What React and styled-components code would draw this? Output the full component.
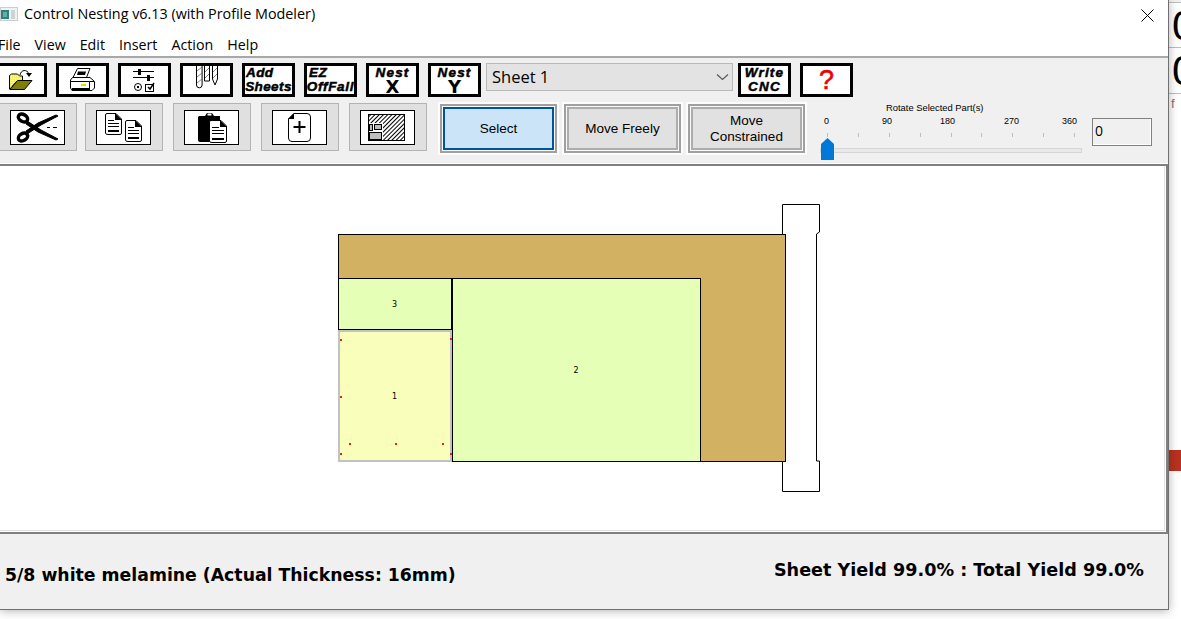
import React from 'react';
import styled, { createGlobalStyle } from 'styled-components';

const GlobalStyle = createGlobalStyle`
  html, body {
    margin: 0;
    height: 100%;
    overflow: hidden;
    background: #fff;
  }
  * { box-sizing: border-box; }
`;

const Screen = styled.div`
  display: flex;
  width: 1181px;
  height: 619px;
  overflow: hidden;
  font-family: "Open Sans", "Noto Sans", sans-serif;
  color: #000;
`;

const Window = styled.div`
  position: relative;
  z-index: 1;
  flex: none;
  display: flex;
  flex-direction: column;
  width: 1169px;
  height: 610px;
  background: #f0f0f0;
  border-right: 1px solid #707070;
  border-bottom: 1px solid #707070;
  box-shadow: 0 1px 9px rgba(0, 0, 0, 0.3);
  overflow: hidden;
`;

const TitleBar = styled.div`
  flex: none;
  display: flex;
  align-items: center;
  height: 30px;
  padding-bottom: 3px;
  background: #fff;
  font-size: 14.35px;
`;

const TitleText = styled.span`
  margin-left: 6px;
  flex: 1;
`;

const CloseIcon = styled.svg`
  margin-right: 14px;
  margin-top: 3px;
`;

const MenuBar = styled.div`
  flex: none;
  display: flex;
  align-items: center;
  gap: 14px;
  height: 28px;
  padding: 2px 0 0 0;
  margin-left: -2px;
  background: #fff;
  border-bottom: 2px solid #a8a8a8;
  font-size: 14.25px;
`;

const MenuItem = styled.span``;

const ToolRow = styled.div`
  flex: none;
  display: flex;
  align-items: flex-start;
  margin-top: 5px;
  margin-left: ${({ $left }) => $left}px;
`;

const IconGroup = styled.div`
  display: flex;
  gap: 9px;
`;

const FrameButton = styled.div`
  flex: none;
  display: flex;
  flex-direction: column;
  align-items: center;
  justify-content: center;
  width: 53px;
  height: 34px;
  background: #fff;
  border: 3px solid #000;
  overflow: hidden;
`;

const ItalicLabel = styled.span`
  display: block;
  align-self: ${({ $start }) => ($start !== undefined ? 'flex-start' : 'center')};
  margin-left: ${({ $start }) => $start || 0}px;
  font-family: "Liberation Sans", sans-serif;
  font-size: 13.5px;
  font-weight: 700;
  font-style: italic;
  line-height: 14px;
  letter-spacing: ${({ $spacing }) => $spacing || 0.4}px;
  -webkit-text-stroke: 0.5px #000;
  white-space: nowrap;
`;

const AxisLabel = styled.span`
  display: block;
  font-family: "DejaVu Sans", sans-serif;
  font-size: 18px;
  font-weight: 700;
  line-height: 14px;
`;

const HelpMark = styled.span`
  font-family: "Liberation Sans", sans-serif;
  font-size: 27px;
  line-height: 28px;
  color: #f00000;
  -webkit-text-stroke: 0.6px #f00000;
`;

const SheetSelect = styled.div`
  flex: none;
  display: flex;
  align-items: center;
  justify-content: space-between;
  width: 247px;
  height: 28px;
  margin: 0 5px;
  padding: 0 2px 1px 5px;
  background: #e3e3e3;
  border: 1px solid #b9b9b9;
  font-size: 16.5px;
`;

const TileGroup = styled.div`
  display: flex;
  gap: 10px;
  margin-top: 1px;
  margin-right: 11px;
`;

const Tile = styled.div`
  flex: none;
  width: 78px;
  height: 48px;
  padding: 6px 0 0 10px;
  background: #e0e0e0;
  border: 1px solid #b3b3b3;

  &:first-child {
    margin-right: -2px;
  }
`;

const TileFace = styled.div`
  width: 55px;
  height: 35px;
  background: #fff;
  border: 1px solid #000;
  overflow: hidden;
`;

const ModeGroup = styled.div`
  display: flex;
  gap: 3px;
`;

const ModeButton = styled.div`
  flex: none;
  display: flex;
  align-items: center;
  justify-content: center;
  width: 121px;
  height: 53px;
  padding: 0 9px;
  text-align: center;
  font-family: "Liberation Sans", sans-serif;
  font-size: 13.5px;
  line-height: 16px;
  background: ${({ $active }) => ($active ? '#cce4f7' : '#e1e1e1')};
  box-shadow:
    inset 0 0 0 2px #fdfdfd,
    inset 0 0 0 4px #a0a0a0,
    inset 0 0 0 5px #f8f8f8,
    inset 0 0 0 7px ${({ $active }) => ($active ? '#005499' : '#adadad')};
`;

const RotateGroup = styled.div`
  position: relative;
  flex: none;
  display: flex;
  flex-direction: column;
  width: 262px;
  margin-left: 13px;
  font-family: "Liberation Sans", sans-serif;
`;

const RotateTitle = styled.div`
  margin: 0 0 0 66px;
  height: 12px;
  font-size: 9.4px;
  line-height: 12px;
`;

const ScaleLabels = styled.div`
  display: grid;
  grid-template-columns: 58px 58px 64px 58px auto;
  margin: 1px 0 0 4px;
  height: 15px;
  font-size: 9px;
  line-height: 12px;
`;

const ScaleLabel = styled.span``;

const Ticks = styled.div`
  display: flex;
  justify-content: space-between;
  width: 248px;
  margin: 3px 0 0 7px;
`;

const Tick = styled.span`
  width: 1px;
  height: 4px;
  background: #bdbdbd;
`;

const Track = styled.div`
  height: 5px;
  margin: 11px 0 0 0;
  background: #e7eae7;
  border: 1px solid #d6d6d6;
`;

const Thumb = styled.svg`
  position: absolute;
  left: 1px;
  top: 36px;
`;

const ValueBox = styled.div`
  flex: none;
  width: 60px;
  height: 28px;
  margin: 16px 0 0 10px;
  padding-left: 2px;
  font-size: 14px;
  line-height: 24px;
  background: #f0f0f0;
  border: 1px solid #808080;
  box-shadow: inset -1px -1px 0 #fff;
`;

const Canvas = styled.div`
  position: relative;
  flex: none;
  height: 370px;
  margin-top: 9px;
  background: #fff;
  border: solid #808080;
  border-width: 2px 2px 2px 0;
  box-shadow: inset -1px -1px 0 #fff, inset -2px -2px 0 #e0e0e0, 0 -1px 0 #fff;
`;

const Sheet = styled.div`
  position: absolute;
  left: ${({ $x }) => $x}px;
  top: ${({ $y }) => $y}px;
  width: ${({ $w }) => $w}px;
  height: ${({ $h }) => $h}px;
  background: #d3b163;
  border: 1px solid #000;
`;

const Part = styled.div`
  position: absolute;
  left: ${({ $x }) => $x}px;
  top: ${({ $y }) => $y}px;
  width: ${({ $w }) => $w}px;
  height: ${({ $h }) => $h}px;
  display: flex;
  align-items: center;
  justify-content: center;
  padding-right: 1px;
  background: ${({ $selected }) => ($selected ? '#fafebb' : '#e6ffb6')};
  border: ${({ $selected }) => ($selected ? '2px solid #c2c2c2' : '1px solid #000')};
  font-family: "DejaVu Sans", sans-serif;
  font-size: 8px;
`;

const Marker = styled.span`
  position: absolute;
  left: ${({ $x }) => $x}px;
  top: ${({ $y }) => $y}px;
  width: 2px;
  height: 2px;
  background: #e8202a;
`;

const Bracket = styled.svg`
  position: absolute;
  left: 780px;
  top: 38px;
`;

const StatusBar = styled.div`
  flex: 1;
  display: flex;
  justify-content: space-between;
  align-items: flex-start;
  padding: 0 24px 0 5px;
  font-family: "DejaVu Sans", sans-serif;
  font-weight: 700;
`;

const StatusText = styled.span`
  margin-top: ${({ $top }) => $top}px;
  font-size: ${({ $size }) => $size}px;
  line-height: 20px;
`;

const SideStrip = styled.div`
  flex: 1;
  display: flex;
  flex-direction: column;
  min-width: 0;
  overflow: hidden;
  font-family: "Liberation Sans", sans-serif;
`;

const SideTop = styled.div`
  flex: none;
  height: 3px;
  background: #f0f0f0;
  border-bottom: 1px solid #bdbdbd;
`;

const SideCell = styled.div`
  flex: none;
  height: ${({ $h }) => $h}px;
  padding-left: 3px;
  font-size: 42px;
  line-height: ${({ $h }) => $h}px;
  background: #fff;
  border-bottom: 1px solid #bdbdbd;
`;

const SideNote = styled.div`
  flex: none;
  height: 22px;
  padding-left: 2px;
  font-size: 13px;
  line-height: 20px;
  color: #777;
`;

const SideAlert = styled.div`
  flex: none;
  height: 21px;
  margin-top: 334px;
  background: #b8321f;
`;

const AppIcon = () => (
  <svg width="18" height="14" viewBox="0 0 18 14" shapeRendering="crispEdges">
    <rect width="18" height="14" fill="#c9cfcf" />
    <rect x="1" y="1" width="16" height="12" fill="#eef2f2" />
    <rect x="1" y="3" width="8" height="9" fill="#2f7f7c" />
    <rect x="3" y="5" width="4" height="5" fill="#5fb0a8" />
    <rect x="11" y="3" width="4" height="9" fill="#cdd4d4" />
  </svg>
);

const FolderIcon = () => (
  <svg width="47" height="28" viewBox="0 0 47 28">
    <defs>
      <pattern id="dither" width="2" height="2" patternUnits="userSpaceOnUse">
        <rect width="2" height="2" fill="#f7f06a" />
        <rect width="1" height="1" fill="#fff" />
      </pattern>
    </defs>
    <path d="M12.500 23V9.500L14.500 8H20.500L22.500 10H25.500V16H19L13 23Z" fill="url(#dither)" stroke="#000" />
    <path d="M13 23.500 20.500 14.500H35L27.500 23.500Z" fill="#808000" stroke="#000" />
    <path d="M23 9C24 3.500 30 3 32 8" fill="none" stroke="#000" />
    <path d="M29 7h6l-3 4Z" fill="#000" />
  </svg>
);

const PrinterIcon = () => (
  <svg width="47" height="28" viewBox="0 0 47 28">
    <path d="M18.500 2.500H31L27.500 11.500H14Z" fill="#fff" stroke="#000" />
    <path d="M19 5.500H27L26 9H18Z" fill="#000" />
    <path d="M13.500 11.500H31L35.500 15.500V22L33 24.500H13L11.500 22V14Z" fill="#fff" stroke="#000" />
    <path d="M12 15.500H30.500L35 15.500M30.500 15.500V24" fill="none" stroke="#000" />
    <rect x="22" y="18" width="5" height="2" fill="#e6d800" />
    <rect x="13" y="22" width="17" height="2" fill="#000" />
  </svg>
);

const SettingsIcon = () => (
  <svg width="47" height="28" viewBox="0 0 47 28" shapeRendering="crispEdges">
    <path d="M12 5.500h21M12 11.500h21" stroke="#000" />
    <rect x="17" y="3" width="3" height="6" fill="#000" />
    <rect x="26" y="9" width="3" height="6" fill="#000" />
    <circle cx="17" cy="21" r="3.500" fill="none" stroke="#000" shapeRendering="auto" />
    <circle cx="17" cy="21" r="1" fill="#000" />
    <rect x="24.500" y="18.500" width="8" height="7" fill="none" stroke="#000" />
    <path d="M27 21l2 2 4-6" fill="none" stroke="#000" strokeWidth="1.500" shapeRendering="auto" />
  </svg>
);

const BitsIcon = () => (
  <svg width="47" height="28" viewBox="0 0 47 28">
    <path d="M13.500 0V19a2.800 2.800 0 0 0 5.600 0V0" fill="none" stroke="#000" />
    <path d="M14 5l5-4M14 11l5-4M14 17l5-4" stroke="#555" strokeWidth="0.700" />
    <path d="M21.500 0V15H26.500V0" fill="none" stroke="#000" />
    <path d="M22 6l4-4M22 12l4-4" stroke="#555" strokeWidth="0.700" />
    <path d="M29.500 0V13L32 19 34.500 13V0" fill="none" stroke="#000" />
    <path d="M30 6l4-4M30 12l4-4" stroke="#555" strokeWidth="0.700" />
  </svg>
);

const ChevronIcon = () => (
  <svg width="15" height="10" viewBox="0 0 15 10">
    <path d="M2 2.500 7.500 7.500 13 2.500" fill="none" stroke="#555" strokeWidth="1.100" />
  </svg>
);

const ScissorsIcon = () => (
  <svg width="53" height="33" viewBox="0 0 53 33">
    <ellipse cx="12" cy="7" rx="5" ry="3.500" fill="none" stroke="#000" strokeWidth="3.500" transform="rotate(30 12 7)" />
    <ellipse cx="12" cy="26" rx="5" ry="3.500" fill="none" stroke="#000" strokeWidth="3.500" transform="rotate(-30 12 26)" />
    <path d="M16 10 30 19 47 28 45 29 27 21 15 13Z" fill="#000" stroke="#000" />
    <path d="M16 23 30 14 47 5 45 4 27 12 15 20Z" fill="#000" stroke="#000" />
    <path d="M32 16.500h2M37 16.500h3M43 16.500h3" stroke="#fff" />
    <path d="M36 16.500h3M42 16.500h4" stroke="#000" />
  </svg>
);

// one page with the folded corner, used by the copy and paste icons
const Page = ({ x, y, w = 17, h = 22 }) => (
  <g transform={`translate(${x} ${y})`}>
    <path
      d={`M2 .5H${w - 6}L${w - 0.5} 6V${h - 2}Q${w - 0.5} ${h - 0.5} ${w - 2} ${h - 0.5}H3Q.5 ${h - 0.5} .5 ${h - 2}V2Q.5 .5 2 .5Z`}
      fill="#fff"
      stroke="#000"
    />
    <path d={`M${w - 7} 0 ${w} 7H${w - 7}Z`} fill="#000" />
    <path d={`M3 7.500H${w - 8}M3 10.500H${w - 3}M3 13.500H${w - 3}`} stroke="#000" />
    <rect x="3" y={h - 5} width={w - 6} height="2" fill="#000" />
  </g>
);

const CopyIcon = () => (
  <svg width="53" height="33" viewBox="0 0 53 33">
    <Page x={8} y={2} />
    <Page x={28} y={9} />
  </svg>
);

const PasteIcon = () => (
  <svg width="53" height="33" viewBox="0 0 53 33">
    <path d="M14 5h6l2-3h5l2 3h6v26H15Q13 31 13 29V6Z" fill="#000" />
    <rect x="22.500" y="2.500" width="4" height="2" fill="#fff" />
    <Page x={24} y={9} w={18} h={23} />
  </svg>
);

const InsertIcon = () => (
  <svg width="53" height="33" viewBox="0 0 53 33">
    <path d="M21 2.500H34Q37.500 2.500 37.500 6V27Q37.500 30.500 34 30.500H19Q15.500 30.500 15.500 27V8Z" fill="#fff" stroke="#000" />
    <path d="M21 2 15 8h6Z" fill="#000" />
    <path d="M26.500 10v12M20.500 16h12" stroke="#000" strokeWidth="2" />
  </svg>
);

const LayoutIcon = () => (
  <svg width="53" height="33" viewBox="0 0 53 33" shapeRendering="crispEdges">
    <defs>
      <pattern id="hatch" width="3" height="3" patternUnits="userSpaceOnUse" patternTransform="rotate(45)">
        <rect width="3" height="3" fill="#fff" />
        <rect width="1" height="3" fill="#000" />
      </pattern>
    </defs>
    <rect x="7.500" y="3.500" width="36" height="26" fill="url(#hatch)" stroke="#000" />
    <rect x="8" y="12" width="14" height="17" fill="#fff" />
    <rect x="8.500" y="13.500" width="3" height="6" fill="#bdbdbd" stroke="#000" />
    <rect x="13.500" y="13.500" width="7" height="5" fill="#bdbdbd" stroke="#000" />
    <rect x="8.500" y="21.500" width="12" height="7" fill="#bdbdbd" stroke="#000" />
  </svg>
);

const TILES = [ScissorsIcon, CopyIcon, PasteIcon, InsertIcon, LayoutIcon];
const MENU = ['File', 'View', 'Edit', 'Insert', 'Action', 'Help'];
const ANGLES = [0, 90, 180, 270, 360];
const TICKS = Array.from({ length: 9 }, (_, i) => i);
const MARKERS = [
  [0, 7], [110, 6], [0, 64], [9, 111], [55, 111], [102, 111], [0, 121], [110, 121],
];

const App = () => (
  <Screen>
    <GlobalStyle />
    <Window>
      <TitleBar>
        <AppIcon />
        <TitleText>Control Nesting v6.13 (with Profile Modeler)</TitleText>
        <CloseIcon width="13" height="13" viewBox="0 0 13 13">
          <path d="M.5.5l12 12M12.500.5l-12 12" stroke="#000" />
        </CloseIcon>
      </TitleBar>
      <MenuBar>
        {MENU.map((item) => <MenuItem key={item}>{item}</MenuItem>)}
      </MenuBar>

      <ToolRow $left={-6}>
        <IconGroup>
          <FrameButton><FolderIcon /></FrameButton>
          <FrameButton><PrinterIcon /></FrameButton>
          <FrameButton><SettingsIcon /></FrameButton>
          <FrameButton><BitsIcon /></FrameButton>
          <FrameButton>
            <ItalicLabel $start={1}>Add</ItalicLabel>
            <ItalicLabel>Sheets</ItalicLabel>
          </FrameButton>
          <FrameButton>
            <ItalicLabel $start={2}>EZ</ItalicLabel>
            <ItalicLabel $spacing={0.7}>OffFall</ItalicLabel>
          </FrameButton>
          <FrameButton>
            <ItalicLabel $spacing={1.2}>Nest</ItalicLabel>
            <AxisLabel>X</AxisLabel>
          </FrameButton>
          <FrameButton>
            <ItalicLabel $spacing={1.2}>Nest</ItalicLabel>
            <AxisLabel>Y</AxisLabel>
          </FrameButton>
        </IconGroup>
        <SheetSelect>
          Sheet 1
          <ChevronIcon />
        </SheetSelect>
        <IconGroup>
          <FrameButton>
            <ItalicLabel $spacing={1.2}>Write</ItalicLabel>
            <ItalicLabel $spacing={1.2}>CNC</ItalicLabel>
          </FrameButton>
          <FrameButton><HelpMark>?</HelpMark></FrameButton>
        </IconGroup>
      </ToolRow>

      <ToolRow $left={-1}>
        <TileGroup>
          {TILES.map((Icon, i) => (
            <Tile key={i}><TileFace><Icon /></TileFace></Tile>
          ))}
        </TileGroup>
        <ModeGroup>
          <ModeButton $active>Select</ModeButton>
          <ModeButton>Move Freely</ModeButton>
          <ModeButton>Move Constrained</ModeButton>
        </ModeGroup>
        <RotateGroup>
          <RotateTitle>Rotate Selected Part(s)</RotateTitle>
          <ScaleLabels>
            {ANGLES.map((a) => <ScaleLabel key={a}>{a}</ScaleLabel>)}
          </ScaleLabels>
          <Ticks>
            {TICKS.map((t) => <Tick key={t} />)}
          </Ticks>
          <Track />
          <Thumb width="13" height="22" viewBox="0 0 13 22">
            <path d="M0 6 6.500 0 13 6V22H0Z" fill="#0078d7" />
          </Thumb>
        </RotateGroup>
        <ValueBox>0</ValueBox>
      </ToolRow>

      <Canvas>
        <Bracket width="42" height="290" viewBox="0 0 42 290">
          <path d="M2.500 30V.500H39.500V28L36.500 30V257H39.500V287.500H2.500V257" fill="#fff" stroke="#000" />
        </Bracket>
        <Sheet $x={338} $y={68} $w={448} $h={228} />
        <Part $x={338} $y={112} $w={114} $h={52}>3</Part>
        <Part $x={452} $y={112} $w={249} $h={184}>2</Part>
        <Part $x={338} $y={164} $w={114} $h={132} $selected>
          1
          {MARKERS.map(([x, y]) => <Marker key={`${x}-${y}`} $x={x} $y={y} />)}
        </Part>
      </Canvas>

      <StatusBar>
        <StatusText $top={31} $size={17.3}>5/8 white melamine (Actual Thickness: 16mm)</StatusText>
        <StatusText $top={26} $size={17.6}>Sheet Yield 99.0% : Total Yield 99.0%</StatusText>
      </StatusBar>
    </Window>

    <SideStrip>
      <SideTop />
      <SideCell $h={45}>0</SideCell>
      <SideCell $h={46}>0</SideCell>
      <SideNote>f</SideNote>
      <SideAlert />
    </SideStrip>
  </Screen>
);

export default App;
